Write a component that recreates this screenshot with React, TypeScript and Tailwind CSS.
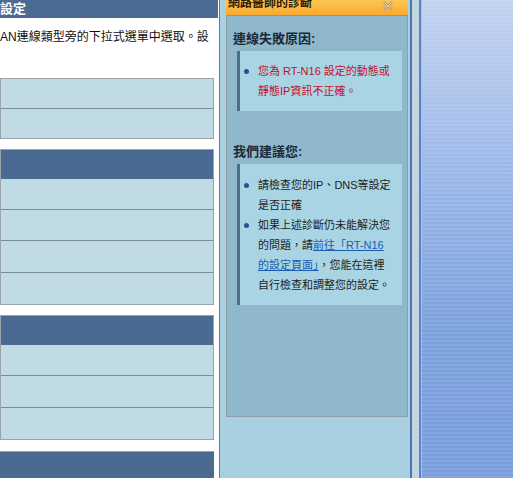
import React from 'react';

const font = 'font-["Liberation_Sans","Noto_Sans_CJK_TC",sans-serif]';

function Bullet({ children }: { children: React.ReactNode }) {
  return (
    <li className="flex items-start">
      <span className="mt-[8px] ml-[4px] mr-[9px] h-[5px] w-[5px] shrink-0 rounded-full bg-[#22558c]" />
      <span className="whitespace-nowrap">{children}</span>
    </li>
  );
}

function Rows({ heights }: { heights: number[] }) {
  return (
    <>
      {heights.map((h, i) => (
        <div
          key={i}
          className={`bg-[#c1dbe4] ${i > 0 ? 'border-t border-[#7b8c99]' : ''}`}
          style={{ height: h }}
        />
      ))}
    </>
  );
}

export default function App() {
  return (
    <div className={`flex h-[478px] w-[513px] overflow-hidden bg-white ${font}`}>
      {/* left settings page */}
      <div className="flex w-[219px] shrink-0 flex-col">
        <div className="h-[19px] w-[218px] bg-[#4b6b93] text-[13px] font-bold leading-[18px] text-white">設定</div>
        <p className="mt-[12px] whitespace-nowrap text-[12px] leading-[14px] text-[#111]">AN連線類型旁的下拉式選單中選取。設</p>

        <div className="mt-[34px] w-[214px] border border-[#9aa3a8]">
          <Rows heights={[29, 30]} />
        </div>

        <div className="mt-[10px] w-[214px] border border-[#9aa3a8]">
          <div className="h-[29px] bg-[#4a6a91]" />
          <Rows heights={[30, 31, 32, 32]} />
        </div>

        <div className="mt-[10px] w-[214px] border border-[#9aa3a8]">
          <div className="h-[29px] bg-[#4a6a91]" />
          <Rows heights={[30, 32, 32]} />
        </div>

        <div className="mt-[11px] h-[30px] w-[214px] border-t border-[#9aa3a8] bg-[#4a6a91]" />
      </div>

      {/* network doctor panel */}
      <div className="flex w-[191px] shrink-0 flex-col border-l border-[#5d7d99] bg-[#a9d0e0] pl-[6px] pr-[2px]">
        <div className="flex w-[182px] flex-col">
          <div className="flex h-[16px] items-start justify-between overflow-hidden border-b border-[#d18c1c] bg-gradient-to-b from-[#ffc653] to-[#f7a92c] pl-[2px] pr-[15px]">
            <span className="-mt-[5px] text-[12px] font-bold leading-[16px] text-[#2b1a05]">網路醫師的診斷</span>
            <svg width="10" height="10" viewBox="0 0 10 10" className="mt-[1px]">
              <path d="M1.5 1.5 L8.5 8.5 M8.5 1.5 L1.5 8.5" stroke="#a39a8a" strokeWidth="2.2" strokeLinecap="round" />
              <path d="M1.5 1.5 L8.5 8.5 M8.5 1.5 L1.5 8.5" stroke="#d6d0c6" strokeWidth="1" strokeLinecap="round" />
            </svg>
          </div>
          <div className="h-[401px] border-x border-b border-[#8c9ea8] bg-[#8fb8cc]">
            <h3 className="mt-[15px] pl-[6px] text-[13px] font-bold leading-[16px] text-[#1b2a38]">連線失敗原因:</h3>
            <div className="mt-[4px] ml-[10px] w-[165px] border-l-[3px] border-[#4d6d84] bg-[#a8d4e4] pt-[10px] pb-[10px]">
              <ul className="text-[11px] leading-[20px] text-[#c2102a]">
                <Bullet>
                  您為 RT-N16 設定的動態或<br />靜態IP資訊不正確。
                </Bullet>
              </ul>
            </div>
            <h3 className="mt-[33px] pl-[6px] text-[13px] font-bold leading-[16px] text-[#1b2a38]">我們建議您:</h3>
            <div className="mt-[4px] ml-[10px] w-[165px] border-l-[3px] border-[#4d6d84] bg-[#a8d4e4] pt-[11px] pb-[10px]">
              <ul className="text-[11px] leading-[20px] text-[#1e1e1e]">
                <Bullet>
                  請檢查您的IP、DNS等設定<br />是否正確
                </Bullet>
                <Bullet>
                  如果上述診斷仍未能解決您<br />的問題，請
                  <a className="text-[#1a5cae] underline">前往「RT-N16</a>
                  <br />
                  <a className="text-[#1a5cae] underline">的設定頁面」</a>，您能在這裡<br />自行檢查和調整您的設定。
                </Bullet>
              </ul>
            </div>
          </div>
        </div>
      </div>

      {/* window frame */}
      <div className="w-[2px] shrink-0 bg-[#4f74b4]" />
      <div className="w-[7px] shrink-0 bg-[#c3d5df]" />
      <div className="w-[2px] shrink-0 bg-[#5b82c4]" />
      <div className="w-[1px] shrink-0 bg-[#a8c4ea]" />
      <div className="flex-1 bg-[repeating-linear-gradient(180deg,rgba(255,255,255,0.09)_0px,rgba(255,255,255,0.09)_2px,transparent_2px,transparent_4px),linear-gradient(180deg,#c2d2f0_0%,#9cb8e8_35%,#7aa0dc_70%,#789ddb_100%)]" />
    </div>
  );
}
